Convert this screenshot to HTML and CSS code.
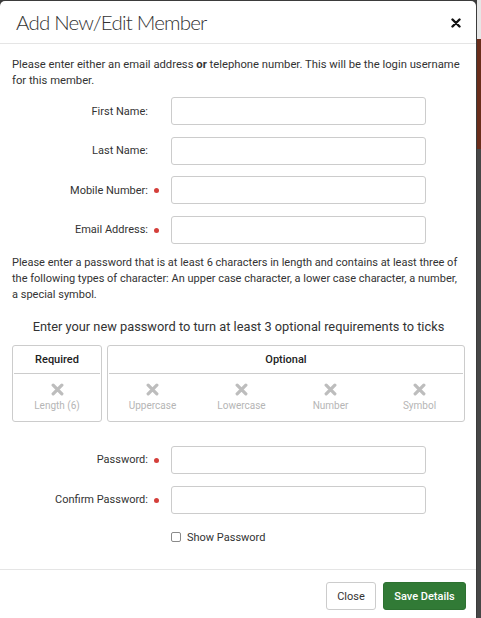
FILE: index.html
```
<!DOCTYPE html>
<html>
<head>
<meta charset="utf-8">
<link rel="stylesheet" href="styles.css">
</head>
<body>
<div class="page">
  <div class="modal">
    <div class="modal-header">
      <h1 class="modal-title">Add New/Edit Member</h1>
      <button class="close-x" aria-label="Close">
        <svg width="10" height="10" viewBox="0 0 10 10"><path d="M1.5 1.5 L8.5 8.5 M8.5 1.5 L1.5 8.5" stroke="#111" stroke-width="2.4" stroke-linecap="round"/></svg>
      </button>
    </div>
    <div class="modal-body">
      <p class="intro">Please enter either an email address <b>or</b> telephone number. This will be the login username for this member.</p>
      <div class="form-grid">
        <label class="lbl">First Name:</label><input class="field" type="text">
        <label class="lbl">Last Name:</label><input class="field" type="text">
        <label class="lbl req">Mobile Number:</label><input class="field" type="text">
        <label class="lbl req">Email Address:</label><input class="field" type="text">
      </div>
      <p class="pw-info">Please enter a password that is at least 6 characters in length and contains at least three of the following types of character: An upper case character, a lower case character, a number, a special symbol.</p>
      <h2 class="pw-heading">Enter your new password to turn at least 3 optional requirements to ticks</h2>
      <div class="req-boxes">
        <div class="req-box required">
          <div class="req-title">Required</div>
          <div class="req-items">
            <div class="req-item"><svg class="cross" width="13" height="13" viewBox="0 0 12 12"><path d="M2 2 L10 10 M10 2 L2 10" stroke="#bdbdbd" stroke-width="3" stroke-linecap="round"/></svg><span>Length (6)</span></div>
          </div>
        </div>
        <div class="req-box optional">
          <div class="req-title">Optional</div>
          <div class="req-items">
            <div class="req-item"><svg class="cross" width="13" height="13" viewBox="0 0 12 12"><path d="M2 2 L10 10 M10 2 L2 10" stroke="#bdbdbd" stroke-width="3" stroke-linecap="round"/></svg><span>Uppercase</span></div>
            <div class="req-item"><svg class="cross" width="13" height="13" viewBox="0 0 12 12"><path d="M2 2 L10 10 M10 2 L2 10" stroke="#bdbdbd" stroke-width="3" stroke-linecap="round"/></svg><span>Lowercase</span></div>
            <div class="req-item"><svg class="cross" width="13" height="13" viewBox="0 0 12 12"><path d="M2 2 L10 10 M10 2 L2 10" stroke="#bdbdbd" stroke-width="3" stroke-linecap="round"/></svg><span>Number</span></div>
            <div class="req-item"><svg class="cross" width="13" height="13" viewBox="0 0 12 12"><path d="M2 2 L10 10 M10 2 L2 10" stroke="#bdbdbd" stroke-width="3" stroke-linecap="round"/></svg><span>Symbol</span></div>
          </div>
        </div>
      </div>
      <div class="form-grid pw-grid">
        <label class="lbl req">Password:</label><input class="field" type="password">
        <label class="lbl req">Confirm Password:</label><input class="field" type="password">
        <span></span><label class="show-pw"><input type="checkbox" class="chk"> Show Password</label>
      </div>
    </div>
    <div class="modal-footer">
      <button class="btn btn-default">Close</button>
      <button class="btn btn-save">Save Details</button>
    </div>
  </div>
  <div class="backdrop-strip">
    <div class="seg seg-light"></div>
    <div class="seg seg-brown"></div>
    <div class="seg seg-dark"></div>
  </div>
</div>
</body>
</html>
```
FILE: styles.css
```
* { box-sizing: border-box; }
html, body { margin: 0; padding: 0; }
body {
  background: #3b3b3b;
  font-family: Roboto, "Liberation Sans", Arial, sans-serif;
  color: #333;
  width: 481px;
  height: 618px;
  overflow: hidden;
}
.page {
  display: flex;
  height: 618px;
  padding-top: 1px;
}
.modal {
  width: 476px;
  flex: none;
  background: #fff;
  border-radius: 5px 5px 0 0;
  display: flex;
  flex-direction: column;
}
.backdrop-strip {
  flex: 1;
  display: flex;
  flex-direction: column;
  margin-top: -1px;
  margin-left: 1px;
}
.seg-light { height: 39px; background: #e6e6e6; }
.seg-brown { height: 110px; background: #6a2d1b; }
.seg-dark { flex: 1; background: #474747; }

.modal-header {
  height: 43px;
  border-bottom: 1px solid #e5e5e5;
  display: flex;
  align-items: center;
  justify-content: space-between;
  padding: 0 15px 0 16px;
}
.modal-title {
  margin: 0;
  font-family: Lato, "Open Sans", sans-serif;
  font-weight: 300;
  font-size: 20.5px;
  color: #333;
  letter-spacing: -0.8px;
}
.close-x {
  border: 0;
  background: none;
  padding: 0;
  display: flex;
  margin-top: 1px;
}
.modal-body {
  padding: 13px 11px 0 12px;
  font-size: 11px;
  flex: 1;
}
.intro, .pw-info {
  margin: 0;
  line-height: 16px;
  font-size: 11.25px;
  color: #333;
}
.intro b { font-weight: 700; }
.form-grid {
  display: grid;
  grid-template-columns: 136px 255px;
  column-gap: 23px;
  row-gap: 11.5px;
  margin-top: 8px;
  align-items: center;
}
.lbl {
  text-align: right;
  font-size: 11px;
  color: #333;
  position: relative;
}
.lbl.req::after {
  content: "";
  position: absolute;
  right: -11px;
  top: 50%;
  width: 5px;
  height: 5px;
  margin-top: -2px;
  border-radius: 50%;
  background: #d43f3a;
}
.field {
  height: 28px;
  border: 1px solid #ccc;
  border-radius: 3px;
  background: #fff;
  font-family: inherit;
  font-size: 11px;
}
.pw-info { margin-top: 11px; font-size: 11px; }
.pw-heading {
  margin: 14px 0 0;
  text-align: center;
  font-weight: 400;
  font-size: 12.8px;
  line-height: 20px;
  color: #333;
}
.req-boxes {
  display: flex;
  gap: 5px;
  margin-top: 8px;
}
.req-box {
  border: 1px solid #ccc;
  border-radius: 3px;
  height: 77px;
  display: flex;
  flex-direction: column;
}
.required { width: 90px; }
.optional { flex: 1; }
.req-title {
  height: 28px;
  margin: 0 1px;
  border-bottom: 1px solid #ccc;
  display: flex;
  align-items: center;
  justify-content: center;
  font-size: 11px;
  font-weight: 500;
  color: #222;
}
.req-items {
  flex: 1;
  display: flex;
}
.req-item {
  flex: 1;
  display: flex;
  flex-direction: column;
  align-items: center;
  padding-top: 9px;
  font-size: 10px;
  color: #b5b5b5;
}
.cross { margin-bottom: 4px; }
.pw-grid {
  margin-top: 24px;
  row-gap: 12px;
}
.show-pw {
  display: flex;
  align-items: center;
  gap: 6px;
  font-size: 11px;
  color: #333;
  margin-top: 5px;
}
.chk {
  appearance: none;
  -webkit-appearance: none;
  width: 10px;
  height: 10px;
  margin: 0;
  border: 1px solid #8a8a8a;
  border-radius: 2px;
  background: #fff;
}
.modal-footer {
  border-top: 1px solid #e5e5e5;
  height: 49px;
  padding: 12px 10px 0 0;
  display: flex;
  justify-content: flex-end;
  align-items: flex-start;
  gap: 7px;
}
.btn {
  height: 28px;
  border-radius: 3px;
  font-family: inherit;
  font-size: 11px;
  padding: 0 10px;
}
.btn-default {
  background: #fff;
  border: 1px solid #ccc;
  color: #333;
  width: 50px;
}
.btn-save {
  background: #317a36;
  border: 1px solid #2d7131;
  color: #fff;
  font-weight: 500;
  width: 83px;
}
```
